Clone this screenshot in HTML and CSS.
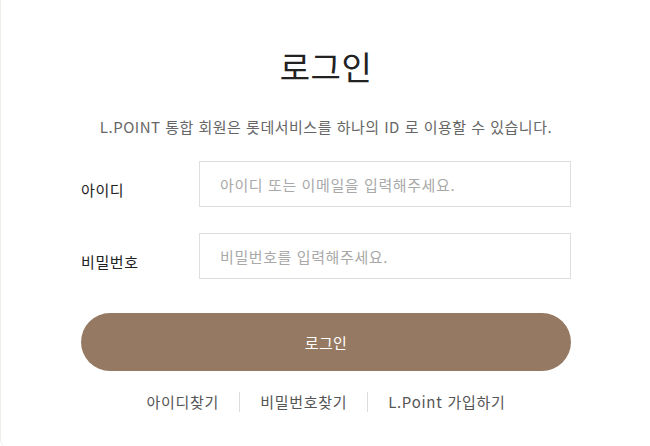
FILE: index.html
```html
<!DOCTYPE html>
<html lang="ko">
<head>
<meta charset="utf-8">
<title>로그인</title>
<link rel="stylesheet" href="styles.css">
</head>
<body>
<div class="card">
  <div class="login">
    <h1 class="title">로그인</h1>
    <p class="desc">L.POINT 통합 회원은 롯데서비스를 하나의 ID 로 이용할 수 있습니다.</p>
    <form class="form">
      <div class="row">
        <label class="label" for="uid">아이디</label>
        <input class="input" id="uid" type="text" placeholder="아이디 또는 이메일을 입력해주세요.">
      </div>
      <div class="row">
        <label class="label" for="upw">비밀번호</label>
        <input class="input" id="upw" type="password" placeholder="비밀번호를 입력해주세요.">
      </div>
      <button class="btn" type="button">로그인</button>
    </form>
    <ul class="links">
      <li class="link-item"><a class="link" href="#">아이디찾기</a></li>
      <li class="link-item"><a class="link" href="#">비밀번호찾기</a></li>
      <li class="link-item"><a class="link" href="#">L.Point 가입하기</a></li>
    </ul>
  </div>
</div>
</body>
</html>
```
FILE: styles.css
```css
* { box-sizing: border-box; }
html, body { margin: 0; padding: 0; background: #fff; }
body {
  font-family: "Noto Sans CJK KR", "Noto Sans", sans-serif;
  color: #222;
  overflow: hidden;
}
.card {
  width: 650px;
  height: 446px;
  border-left: 1px solid #f1ede9;
  border-bottom-left-radius: 6px;
  background: #fff;
}
.login {
  width: 490px;
  margin-left: 80px;
  padding-top: 46px;
}
.title {
  margin: 0;
  font-size: 33px;
  line-height: 40px;
  font-weight: 400;
  color: #222;
  text-align: center;
  letter-spacing: 0.5px;
}
.desc {
  margin: 30px 0 0;
  font-size: 15px;
  line-height: 22px;
  color: #666;
  text-align: center;
  letter-spacing: 0.5px;
}
.form {
  margin-top: 23px;
  display: flex;
  flex-direction: column;
  gap: 26px;
}
.row {
  display: flex;
  align-items: center;
}
.label {
  width: 118px;
  flex: none;
  font-size: 15px;
  line-height: 22px;
  padding-top: 11px;
  color: #222;
  letter-spacing: 0.6px;
}
.input {
  flex: 1;
  height: 46px;
  border: 1px solid #dedede;
  padding: 0 20px;
  font-family: inherit;
  font-size: 15px;
  letter-spacing: 0.6px;
  color: #222;
  outline: none;
  background: #fff;
}
.input::placeholder { color: #a9a9a9; }
.btn {
  margin-top: 8px;
  height: 58px;
  border: 0;
  border-radius: 29px;
  background: #957962;
  color: #fff;
  font-family: inherit;
  font-size: 15px;
  letter-spacing: 0.4px;
  cursor: pointer;
}
.links {
  list-style: none;
  margin: 21px 0 0;
  padding: 0;
  display: flex;
  justify-content: center;
  align-items: center;
}
.link-item {
  padding: 0 20px;
  border-left: 1px solid #dcdcdc;
  line-height: 17px;
}
.link-item:first-child { border-left: 0; }
.link {
  font-size: 15px;
  color: #555;
  text-decoration: none;
  display: inline-block;
  line-height: 20px;
  letter-spacing: 0.7px;
}
```
